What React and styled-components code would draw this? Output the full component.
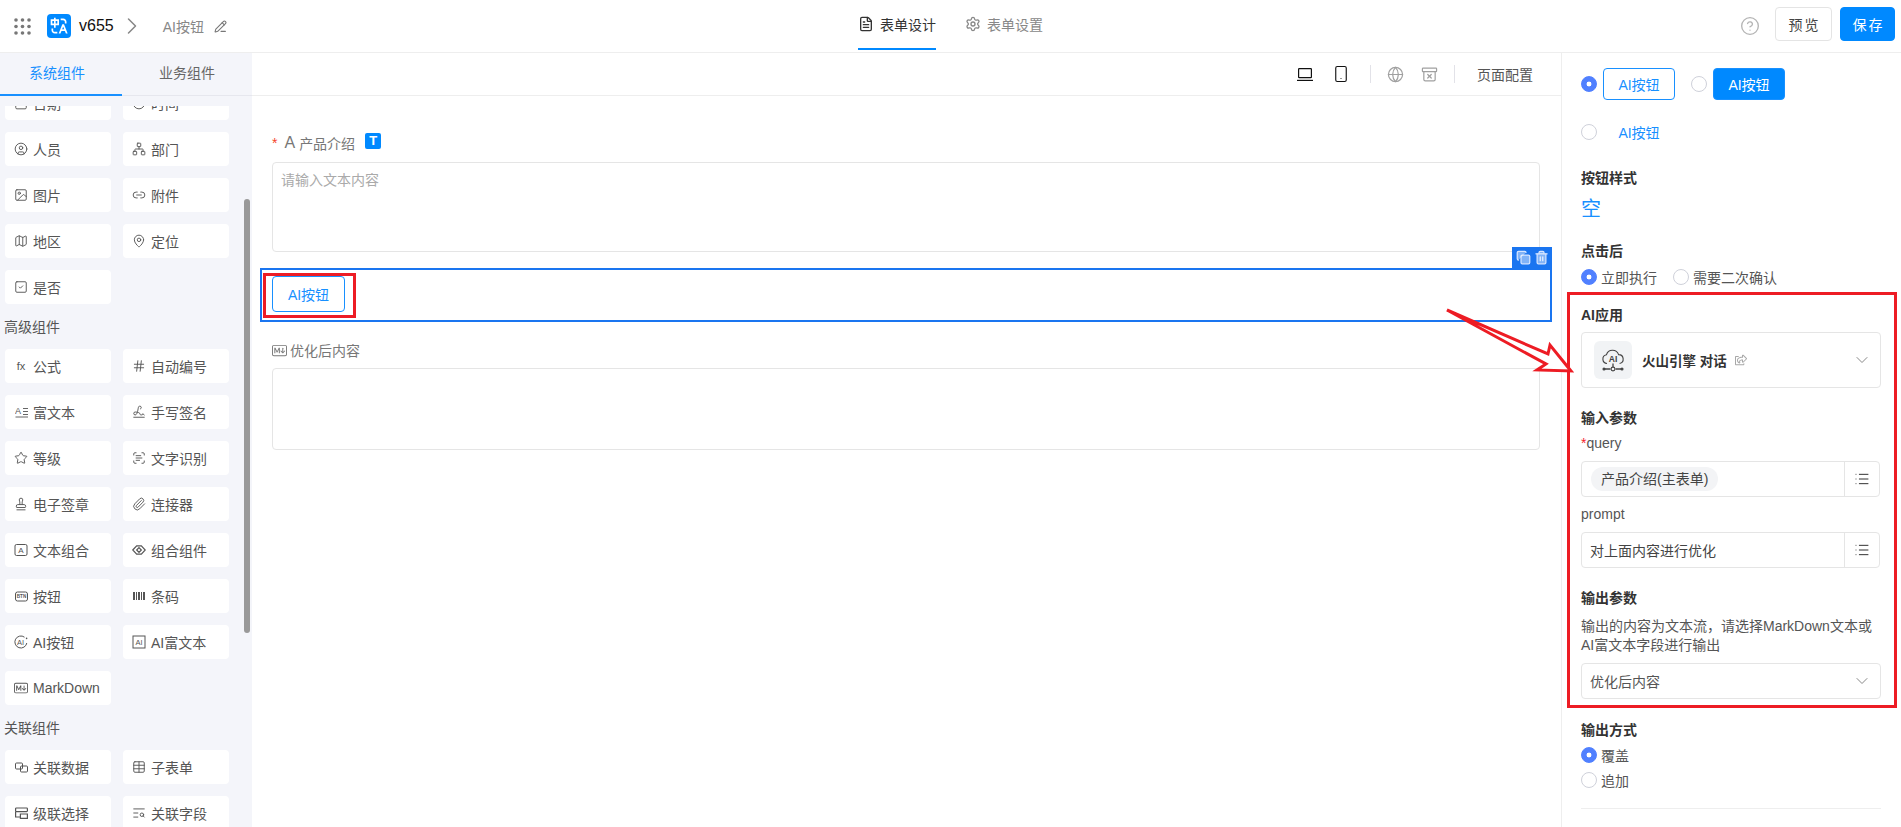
import React from "react";
import styled, { createGlobalStyle } from "styled-components";
import {
  ArchiveX,
  Calendar,
  ChevronDown,
  ChevronRight,
  CircleHelp,
  CircleUser,
  Clock,
  Copy,
  FileText,
  Globe,
  Hash,
  Image,
  Link2,
  List,
  Map,
  MapPin,
  Network,
  Paperclip,
  PencilLine,
  ScanText,
  Settings,
  Signature,
  Smartphone,
  SquareCheck,
  Stamp,
  Star,
  Table,
  TextSearch,
  Trash2,
} from "lucide-react";
import { BsMarkdown } from "react-icons/bs";
import { FaRegShareSquare } from "react-icons/fa";
import { RiTranslate } from "react-icons/ri";

const GlobalStyle = createGlobalStyle`
  html, body {
    margin: 0;
    padding: 0;
    height: 100%;
    overflow: hidden;
    background: #fff;
  }
  * {
    box-sizing: border-box;
  }
  body {
    font-family: "Liberation Sans", "Noto Sans CJK SC", sans-serif;
    font-size: 14px;
    color: #555;
  }
`;

const Page = styled.div`
  position: relative;
  width: 1901px;
  height: 827px;
  overflow: hidden;
  display: flex;
  flex-direction: column;
`;

const Header = styled.header`
  height: 53px;
  flex: none;
  border-bottom: 1px solid #eee;
  display: grid;
  grid-template-columns: 1fr auto 1fr;
  align-items: center;
`;

const HeaderLeft = styled.div`
  display: flex;
  align-items: center;
  padding-left: 14px;
  color: #777;
`;

const Logo = styled.div`
  width: 24px;
  height: 24px;
  margin-left: 16px;
  border-radius: 4px;
  background: #0089ff;
  color: #fff;
  display: flex;
  align-items: center;
  justify-content: center;
`;

const AppName = styled.span`
  margin-left: 8px;
  font-size: 16px;
  color: #111;
`;

const BreadcrumbArrow = styled.span`
  display: flex;
  margin-left: 4px;
  color: #888;
`;

const PageName = styled.span`
  margin: 0 10px 0 17px;
  color: #888;
`;

const HeaderTabs = styled.nav`
  display: flex;
  height: 52px;
  gap: 29px;
`;

const HeaderTab = styled.div`
  height: 50px;
  display: flex;
  align-items: center;
  gap: 6px;
  color: ${(props) => (props.$active ? "#333" : "#888")};
  border-bottom: 2px solid ${(props) => (props.$active ? "#0089ff" : "transparent")};
`;

const HeaderRight = styled.div`
  display: flex;
  align-items: center;
  justify-content: flex-end;
  padding-right: 6px;
  color: #b4b4b4;
`;

const PreviewButton = styled.button`
  width: 57px;
  height: 34px;
  margin: 0 0 4px 15px;
  border: 1px solid #e4e4e4;
  border-radius: 4px;
  background: #fff;
  color: #444;
  font: inherit;
  letter-spacing: 2px;
  padding: 0 0 0 2px;
`;

const SaveButton = styled(PreviewButton)`
  width: 55px;
  margin-left: 8px;
  border-color: #0089ff;
  background: #0089ff;
  color: #fff;
`;

const Body = styled.div`
  flex: 1;
  min-height: 0;
  display: flex;
`;

const Sidebar = styled.aside`
  position: relative;
  width: 252px;
  flex: none;
  background: #f4f5fa;
  display: flex;
  flex-direction: column;
`;

const SideTabs = styled.div`
  height: 43px;
  flex: none;
  display: flex;
  border-bottom: 1px solid #e6e7ee;
`;

const SideTab = styled.div`
  width: ${(props) => (props.$active ? "122px" : "130px")};
  height: 43px;
  padding-left: ${(props) => (props.$active ? "29px" : "37px")};
  line-height: 41px;
  color: ${(props) => (props.$active ? "#1890ff" : "#666")};
  border-bottom: ${(props) => (props.$active ? "2px solid #1890ff" : "none")};
`;

const ListClip = styled.div`
  flex: 1;
  min-height: 0;
  margin-top: 10px;
  overflow: hidden;
`;

const ListInner = styled.div`
  margin-top: -20px;
  padding-left: 5px;
`;

const ItemGrid = styled.div`
  display: grid;
  grid-template-columns: 106px 106px;
  grid-auto-rows: 34px;
  gap: 12px;
`;

const Item = styled.div`
  background: #fff;
  border-radius: 4px;
  padding-left: 9px;
  display: flex;
  align-items: center;
  color: #555;
  white-space: nowrap;
`;

const ItemIcon = styled.span`
  width: 14px;
  height: 14px;
  margin-right: 5px;
  flex: none;
  display: flex;
  align-items: center;
  justify-content: center;
  font-size: 11px;
  color: #555;
`;

const GroupTitle = styled.div`
  margin: 13px 0 11px -1px;
  height: 21px;
  line-height: 21px;
  color: #555;
`;

const ScrollThumb = styled.div`
  position: absolute;
  left: 244px;
  top: 146px;
  width: 6px;
  height: 434px;
  border-radius: 3px;
  background: #999;
`;

const Canvas = styled.main`
  flex: 1;
  min-width: 0;
  display: flex;
  flex-direction: column;
`;

const Toolbar = styled.div`
  height: 43px;
  flex: none;
  border-bottom: 1px solid #eee;
  display: flex;
  align-items: center;
  justify-content: flex-end;
  padding-right: 28px;
`;

const ToolIcon = styled.span`
  display: flex;
  margin-left: ${(props) => props.$gap}px;
  color: ${(props) => (props.$muted ? "#a0a0a0" : "#111")};
`;

const ToolDivider = styled.span`
  width: 1px;
  height: 18px;
  margin-left: ${(props) => props.$gap || 16}px;
  background: #e2e2e8;
`;

const ToolText = styled.span`
  margin-left: 22px;
  color: #555;
`;

const FormArea = styled.div`
  padding: 37px 9px 0 8px;
`;

const Field = styled.div`
  padding: 0 12px;
  margin-top: ${(props) => props.$top || 0}px;
`;

const FieldLabel = styled.div`
  height: 20px;
  margin-bottom: ${(props) => props.$bottom}px;
  display: flex;
  align-items: center;
  color: #777;
`;

const Required = styled.span`
  color: #f5452a;
  margin-right: 7px;
`;

const TypeGlyph = styled.span`
  font-size: 16px;
  margin-right: 4px;
  color: #777;
`;

const TypeBadge = styled.span`
  width: 16px;
  height: 16px;
  margin: -4px 0 0 10px;
  border-radius: 2px;
  background: #0089ff;
  color: #fff;
  font-size: 13px;
  font-weight: 700;
  line-height: 16px;
  text-align: center;
`;

const MarkdownMark = styled.span`
  display: flex;
  margin-right: 3px;
  color: #777;
`;

const TextBox = styled.div`
  height: ${(props) => props.$height}px;
  border: 1px solid #e5e5e5;
  border-radius: 4px;
  padding: 8px;
  font-size: 14px;
  line-height: 18px;
  color: #aaa;
`;

const Selected = styled.div`
  position: relative;
  height: 54px;
  margin-top: 16px;
  border: 2px solid #1a75f0;
  padding: 6px 10px;
`;

const SelectedActions = styled.div`
  position: absolute;
  right: -2px;
  top: -23px;
  width: 40px;
  height: 21px;
  background: #1a75f0;
  color: #d6e5ff;
  display: flex;
  align-items: center;
  justify-content: center;
  gap: 3px;
`;

const AiButton = styled.button`
  width: ${(props) => props.$width || 72}px;
  height: ${(props) => props.$height || 32}px;
  padding: 0;
  border: 1px solid ${(props) => (props.$variant === "link" ? "transparent" : "#1890ff")};
  border-radius: 4px;
  font: inherit;
  color: ${(props) => (props.$variant === "solid" ? "#fff" : "#1890ff")};
  background: ${(props) => (props.$variant === "solid" ? "#0089ff" : "#fff")};
`;

const NoteBox = styled.div`
  position: absolute;
  left: 1px;
  top: 3px;
  width: 93px;
  height: 45px;
  border: 3px solid #ed1c24;
`;

const Panel = styled.aside`
  width: 340px;
  flex: none;
  border-left: 1px solid #eee;
  padding: 15px 20px 0 19px;
`;

const StyleRow = styled.div`
  display: flex;
  align-items: center;
  height: 32px;
  margin-bottom: 16px;
`;

const Radio = styled.span`
  width: 16px;
  height: 16px;
  flex: none;
  border-radius: 50%;
  margin-right: ${(props) => props.$gap ?? 4}px;
  margin-left: ${(props) => props.$left || 0}px;
  border: 1px solid ${(props) => (props.$on ? "#5080ff" : "#cfd1da")};
  background: ${(props) => (props.$on ? "radial-gradient(circle, #fff 0 2.2px, #5080ff 2.7px)" : "#fff")};
`;

const SectionTitle = styled.div`
  height: 21px;
  line-height: 21px;
  font-weight: 600;
  color: #333;
  margin-top: ${(props) => props.$top || 0}px;
`;

const EmptyGlyph = styled.div`
  height: 28px;
  margin: 6px 0 18px;
  line-height: 28px;
  font-size: 20px;
  color: #1890ff;
`;

const RadioRow = styled.div`
  display: flex;
  align-items: center;
  height: 22px;
  margin-top: ${(props) => props.$top || 0}px;
  color: #555;
`;

const RadioText = styled.span`
  margin-right: 16px;
`;

const Highlight = styled.section`
  margin: 4px -16px 0 -14px;
  border: 3px solid #ed1c24;
  padding: 10px 13px 6px 11px;
`;

const AppCard = styled.div`
  height: 56px;
  margin-top: 6px;
  border: 1px solid #e5e5e5;
  border-radius: 4px;
  display: flex;
  align-items: center;
  padding: 0 8px 0 12px;
  color: #333;
`;

const AppIcon = styled.div`
  width: 38px;
  height: 38px;
  border-radius: 6px;
  background: #f1f3f5;
  color: #444;
  display: flex;
  align-items: center;
  justify-content: center;
`;

const AppTitle = styled.span`
  margin-left: 10px;
  font-size: 13.5px;
  font-weight: 600;
  color: #333;
`;

const AppLink = styled.span`
  display: flex;
  flex: 1;
  margin-left: 8px;
  color: #a8a8a8;
`;

const ParamLabel = styled.div`
  height: 21px;
  line-height: 21px;
  margin: ${(props) => props.$top}px 0 7px;
  color: #555;
`;

const RequiredMark = styled.span`
  color: #f5222d;
`;

const InputGroup = styled.div`
  height: 36px;
  width: 299px;
  border: 1px solid #e5e5e5;
  border-radius: 4px;
  display: flex;
  align-items: center;
`;

const InputValue = styled.div`
  flex: 1;
  height: 100%;
  padding-left: ${(props) => props.$left}px;
  display: flex;
  align-items: center;
  color: #444;
`;

const Chip = styled.span`
  height: 24px;
  line-height: 24px;
  padding: 0 10px;
  border-radius: 12px;
  background: #f3f4f6;
  color: #444;
`;

const InputAddon = styled.div`
  width: 35px;
  height: 100%;
  border-left: 1px solid #e5e5e5;
  display: flex;
  align-items: center;
  justify-content: center;
  color: #333;
`;

const Hint = styled.div`
  margin: 8px 0;
  font-size: 14px;
  line-height: 19px;
  color: #555;
`;

const SelectBox = styled.div`
  height: 36px;
  border: 1px solid #e5e5e5;
  border-radius: 4px;
  padding: 0 8px;
  display: flex;
  align-items: center;
  justify-content: space-between;
  color: #555;
`;

const Rule = styled.div`
  height: 1px;
  margin-top: 17px;
  background: #eee;
`;

const ArrowLayer = styled.svg`
  position: absolute;
  left: 0;
  top: 0;
  pointer-events: none;
`;

const GridDots = () => (
  <svg width="17" height="17" viewBox="0 0 17 17" fill="#777">
    {[2, 8.5, 15].map((y) =>
      [2, 8.5, 15].map((x) => <circle key={`${x}-${y}`} cx={x} cy={y} r="1.8" />)
    )}
  </svg>
);

const LaptopIcon = () => (
  <svg width="16" height="16" viewBox="0 0 16 16" fill="none" stroke="currentColor" strokeWidth="1.2">
    <rect x="1.6" y="2.6" width="12.8" height="9" rx="0.6" />
    <path d="M0 14.4h16" />
  </svg>
);

const CloudAi = () => (
  <svg width="24" height="24" viewBox="0 0 24 24" fill="none" stroke="currentColor" strokeWidth="1.1">
    <path d="M6 15.5a4.4 4.4 0 0 1-.6-8.7 6.4 6.4 0 0 1 12.2-.2 4.5 4.5 0 0 1 1 8.9" />
    <text x="12" y="13.5" fontSize="8.5" textAnchor="middle" fill="currentColor" stroke="none" fontWeight="700">AI</text>
    <path d="M12 15.5v3.5M3 21h6.5M14.5 21H21" strokeWidth="1.3" />
    <circle cx="12" cy="21" r="1.9" />
    <circle cx="3" cy="21" r="1" fill="currentColor" />
    <circle cx="21" cy="21" r="1" fill="currentColor" />
  </svg>
);

const ButtonGlyph = () => (
  <svg width="13" height="11" viewBox="0 0 13 11" fill="none" stroke="currentColor">
    <rect x="0.5" y="1" width="12" height="9" rx="2" />
    <text x="6.5" y="7.3" fontSize="4.6" textAnchor="middle" fill="currentColor" stroke="none" fontWeight="700">BTN</text>
  </svg>
);

const AiGlyph = () => (
  <svg width="14" height="14" viewBox="0 0 14 14" fill="none" stroke="currentColor">
    <path d="M10.5 2.2A6 6 0 1 0 12.8 8" />
    <text x="6.5" y="10" fontSize="7.5" textAnchor="middle" fill="currentColor" stroke="none">AI</text>
    <circle cx="12.6" cy="3.4" r="0.8" fill="currentColor" stroke="none" />
  </svg>
);

const AiBoxGlyph = () => (
  <svg width="14" height="14" viewBox="0 0 14 14" fill="none" stroke="currentColor">
    <rect x="1" y="1" width="12" height="12" />
    <text x="7" y="10" fontSize="7.5" textAnchor="middle" fill="currentColor" stroke="none">AI</text>
  </svg>
);

const LetterBoxGlyph = () => (
  <svg width="14" height="14" viewBox="0 0 14 14" fill="none" stroke="currentColor">
    <rect x="1" y="1.5" width="12" height="11" rx="1.5" />
    <text x="7" y="10" fontSize="8" textAnchor="middle" fill="currentColor" stroke="none">A</text>
  </svg>
);

const RichGlyph = () => (
  <svg width="13" height="12" viewBox="0 0 13 12" fill="none" stroke="currentColor">
    <text x="0" y="8" fontSize="9" fill="currentColor" stroke="none">A</text>
    <path d="M8 2.5h5M8 5.5h5M8 8.5h5M0.5 11H13" strokeWidth="0.9" />
  </svg>
);

const DiamondEyeGlyph = () => (
  <svg width="15" height="12" viewBox="0 0 15 12" fill="none" stroke="currentColor" strokeWidth="1.3">
    <path d="M0.8 6 5 1.6h5L14.2 6 10 10.4H5z" />
    <path d="M7.5 3.4 10 6 7.5 8.6 5 6z" />
  </svg>
);

const BarcodeGlyph = () => (
  <svg width="12" height="10" viewBox="0 0 12 10" fill="currentColor">
    <path d="M0 1h2v8H0zM3 1h1v8H3zM5 1h2v8H5zM8 1h1v8H8zM10 1h2v8h-2z" />
  </svg>
);

const LinkedDataGlyph = () => (
  <svg width="13" height="11" viewBox="0 0 13 11" fill="none" stroke="currentColor">
    <rect x="0.5" y="1" width="7" height="6" rx="1" />
    <rect x="5.5" y="4" width="7" height="6" rx="1" />
  </svg>
);

const CascadeGlyph = () => (
  <svg width="13" height="12" viewBox="0 0 13 12" fill="none" stroke="currentColor" strokeWidth="1.2">
    <rect x="0.6" y="1" width="11.8" height="3.6" rx="0.8" />
    <path d="M0.6 4.6V10h4.6M12.4 7h-7v4.4h7z" />
  </svg>
);

const ic = { size: 14, strokeWidth: 1.6 };

const basicItems = [
  ["日期", <Calendar {...ic} />],
  ["时间", <Clock {...ic} />],
  ["人员", <CircleUser {...ic} />],
  ["部门", <Network {...ic} />],
  ["图片", <Image {...ic} />],
  ["附件", <Link2 {...ic} />],
  ["地区", <Map {...ic} />],
  ["定位", <MapPin {...ic} />],
  ["是否", <SquareCheck {...ic} />],
];

const advancedItems = [
  ["公式", "fx"],
  ["自动编号", <Hash {...ic} />],
  ["富文本", <RichGlyph />],
  ["手写签名", <Signature {...ic} />],
  ["等级", <Star {...ic} />],
  ["文字识别", <ScanText {...ic} />],
  ["电子签章", <Stamp {...ic} />],
  ["连接器", <Paperclip {...ic} />],
  ["文本组合", <LetterBoxGlyph />],
  ["组合组件", <DiamondEyeGlyph />],
  ["按钮", <ButtonGlyph />],
  ["条码", <BarcodeGlyph />],
  ["AI按钮", <AiGlyph />],
  ["AI富文本", <AiBoxGlyph />],
  ["MarkDown", <BsMarkdown size={14} />],
];

const relatedItems = [
  ["关联数据", <LinkedDataGlyph />],
  ["子表单", <Table {...ic} />],
  ["级联选择", <CascadeGlyph />],
  ["关联字段", <TextSearch {...ic} />],
];

const ItemList = ({ items }) => (
  <ItemGrid>
    {items.map(([name, icon]) => (
      <Item key={name}>
        <ItemIcon>{icon}</ItemIcon>
        {name}
      </Item>
    ))}
  </ItemGrid>
);

const App = () => {
  return (
    <Page>
      <GlobalStyle />
      <Header>
        <HeaderLeft>
          <GridDots />
          <Logo>
            <RiTranslate size={20} />
          </Logo>
          <AppName>v655</AppName>
          <BreadcrumbArrow>
            <ChevronRight size={28} strokeWidth={1.3} />
          </BreadcrumbArrow>
          <PageName>AI按钮</PageName>
          <PencilLine size={13} />
        </HeaderLeft>
        <HeaderTabs>
          <HeaderTab $active>
            <FileText size={16} />
            表单设计
          </HeaderTab>
          <HeaderTab>
            <Settings size={16} />
            表单设置
          </HeaderTab>
        </HeaderTabs>
        <HeaderRight>
          <CircleHelp size={20} strokeWidth={1.6} />
          <PreviewButton>预览</PreviewButton>
          <SaveButton>保存</SaveButton>
        </HeaderRight>
      </Header>
      <Body>
        <Sidebar>
          <SideTabs>
            <SideTab $active>系统组件</SideTab>
            <SideTab>业务组件</SideTab>
          </SideTabs>
          <ListClip>
            <ListInner>
              <ItemList items={basicItems} />
              <GroupTitle>高级组件</GroupTitle>
              <ItemList items={advancedItems} />
              <GroupTitle>关联组件</GroupTitle>
              <ItemList items={relatedItems} />
            </ListInner>
          </ListClip>
          <ScrollThumb />
        </Sidebar>
        <Canvas>
          <Toolbar>
            <ToolIcon><LaptopIcon /></ToolIcon>
            <ToolIcon $gap={19}><Smartphone size={18} strokeWidth={1.5} /></ToolIcon>
            <ToolDivider $gap={20} />
            <ToolIcon $gap={16} $muted><Globe size={17} strokeWidth={1.7} /></ToolIcon>
            <ToolIcon $gap={17} $muted><ArchiveX size={17} strokeWidth={1.7} /></ToolIcon>
            <ToolDivider />
            <ToolText>页面配置</ToolText>
          </Toolbar>
          <FormArea>
            <Field>
              <FieldLabel $bottom={9}>
                <Required>*</Required>
                <TypeGlyph>A</TypeGlyph>
                产品介绍
                <TypeBadge>T</TypeBadge>
              </FieldLabel>
              <TextBox $height={90}>请输入文本内容</TextBox>
            </Field>
            <Selected>
              <SelectedActions>
                <Copy size={15} fill="rgba(255,255,255,0.45)" />
                <Trash2 size={15} fill="rgba(255,255,255,0.45)" />
              </SelectedActions>
              <AiButton $height={36} $width={73}>AI按钮</AiButton>
              <NoteBox />
            </Selected>
            <Field $top={18}>
              <FieldLabel $bottom={8}>
                <MarkdownMark>
                  <BsMarkdown size={15} />
                </MarkdownMark>
                优化后内容
              </FieldLabel>
              <TextBox $height={82} />
            </Field>
          </FormArea>
        </Canvas>
        <Panel>
          <StyleRow>
            <Radio $on $gap={6} />
            <AiButton>AI按钮</AiButton>
            <Radio $left={16} $gap={6} />
            <AiButton $variant="solid">AI按钮</AiButton>
          </StyleRow>
          <StyleRow>
            <Radio $gap={6} />
            <AiButton $variant="link">AI按钮</AiButton>
          </StyleRow>
          <SectionTitle $top={20}>按钮样式</SectionTitle>
          <EmptyGlyph>空</EmptyGlyph>
          <SectionTitle>点击后</SectionTitle>
          <RadioRow $top={4}>
            <Radio $on />
            <RadioText>立即执行</RadioText>
            <Radio />
            <RadioText>需要二次确认</RadioText>
          </RadioRow>
          <Highlight>
            <SectionTitle>AI应用</SectionTitle>
            <AppCard>
              <AppIcon>
                <CloudAi />
              </AppIcon>
              <AppTitle>火山引擎 对话</AppTitle>
              <AppLink>
                <FaRegShareSquare size={12} />
              </AppLink>
              <ChevronDown size={20} strokeWidth={1.2} color="#888" />
            </AppCard>
            <SectionTitle $top={20}>输入参数</SectionTitle>
            <ParamLabel $top={4}>
              <RequiredMark>*</RequiredMark>query
            </ParamLabel>
            <InputGroup>
              <InputValue $left={9}>
                <Chip>产品介绍(主表单)</Chip>
              </InputValue>
              <InputAddon>
                <List size={16} strokeWidth={1.5} />
              </InputAddon>
            </InputGroup>
            <ParamLabel $top={7}>prompt</ParamLabel>
            <InputGroup>
              <InputValue $left={8}>对上面内容进行优化</InputValue>
              <InputAddon>
                <List size={16} strokeWidth={1.5} />
              </InputAddon>
            </InputGroup>
            <SectionTitle $top={20}>输出参数</SectionTitle>
            <Hint>
              输出的内容为文本流，请选择MarkDown文本或
              <br />
              AI富文本字段进行输出
            </Hint>
            <SelectBox>
              优化后内容
              <ChevronDown size={20} strokeWidth={1.2} color="#888" />
            </SelectBox>
          </Highlight>
          <SectionTitle $top={12}>输出方式</SectionTitle>
          <RadioRow $top={3}>
            <Radio $on />
            覆盖
          </RadioRow>
          <RadioRow $top={3}>
            <Radio />
            追加
          </RadioRow>
          <Rule />
        </Panel>
      </Body>
      <ArrowLayer width="1901" height="827">
        <polygon
          points="1447,310 1548,354 1550,345 1571,371 1537,370 1546,364"
          fill="#fff"
          stroke="#ed1c24"
          strokeWidth="3"
        />
      </ArrowLayer>
    </Page>
  );
};

export default App;
